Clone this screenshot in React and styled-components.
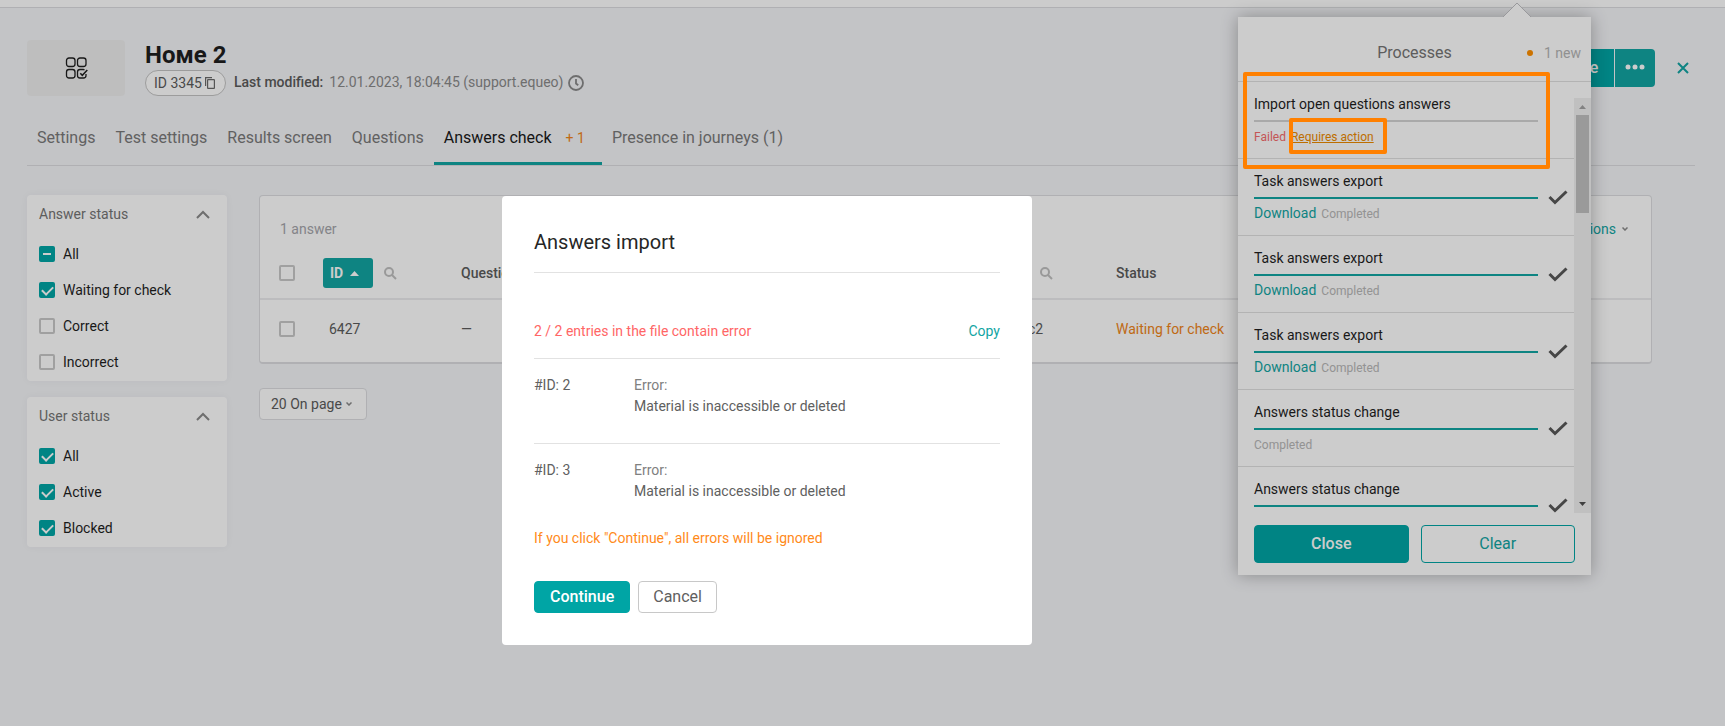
import { useEffect, useRef } from "react";
import styled, { createGlobalStyle } from "styled-components";

const GlobalStyle = createGlobalStyle`
  * {
    box-sizing: border-box;
  }
  body {
    margin: 0;
    background-color: #f4f5f8;
    color: #1f1f1f;
    font-family: Roboto, "Liberation Sans", sans-serif;
    font-size: 14px;
    line-height: 20px;
  }
  button, input, select {
    font-family: inherit;
  }
`;

const Page = styled.div`
  min-height: 100vh;
`;

const TopBar = styled.header`
  height: 8px;
  background-color: #fff;
  border-bottom: 1px solid #dcdde0;
`;

const PageHead = styled.section`
  display: flex;
  align-items: flex-start;
  padding: 32px 30px 0 27px;
`;

const Thumb = styled.div`
  display: flex;
  align-items: center;
  justify-content: center;
  width: 98px;
  height: 56px;
  margin-right: 20px;
  background-color: #eee;
  border-radius: 4px;
`;

const HeadInfo = styled.div`
  flex: 1;
`;

const Title = styled.h1`
  margin: 0;
  font-size: 24px;
  font-weight: 700;
  line-height: 30px;
`;

const Meta = styled.div`
  display: flex;
  align-items: center;
  color: #8a8a8a;
`;

const IdPill = styled.button`
  display: flex;
  align-items: center;
  gap: 3px;
  height: 26px;
  margin-right: 8px;
  padding: 0 10px 0 8px;
  background-color: #fff;
  border: 1px solid #c4c4c4;
  border-radius: 13px;
  color: #5c5c5c;
  font-size: 14px;
`;

const MetaLabel = styled.span`
  margin-right: 6px;
  padding-bottom: 2px;
  color: #5c5c5c;
  font-weight: 500;
`;

const MetaValue = styled.span`
  margin-right: 5px;
  padding-bottom: 2px;
`;

const HeadActions = styled.div`
  display: flex;
  align-items: center;
  gap: 1px;
  padding-top: 9px;
`;

const HeadButton = styled.button`
  display: flex;
  align-items: center;
  justify-content: center;
  height: 38px;
  padding: 0 0 2px;
  width: ${(props) => props.$width};
  background-color: ${(props) => props.$color};
  border: 0;
  border-radius: ${(props) => (props.$last ? "0 4px 4px 0" : "4px 0 0 4px")};
  color: #fff;
  font-size: 16px;
  font-weight: 500;
`;

const CloseButton = styled.button`
  display: flex;
  margin-left: 16px;
  padding: 0 6px 0 5px;
  background: none;
  border: 0;
`;

const Tabs = styled.nav`
  display: flex;
  margin: 24px 30px 0 27px;
  border-bottom: 1px solid #dcdde0;
`;

const Tab = styled.a`
  display: flex;
  gap: 14px;
  height: 45px;
  padding: 8px ${(props) => (props.$active ? "17px" : "10px")} 0 10px;
  border-bottom: 3px solid ${(props) => (props.$active ? "#12a5a3" : "transparent")};
  color: ${(props) => (props.$active ? "#1a1a1a" : "#7a7a7a")};
  font-size: 16px;
  text-decoration: none;
`;

const TabCount = styled.span`
  color: #f08519;
  font-size: 14px;
`;

const Content = styled.main`
  display: flex;
  align-items: flex-start;
  gap: 32px;
  padding: 29px 73px 0 27px;
`;

const Sidebar = styled.aside`
  display: flex;
  flex-direction: column;
  gap: 16px;
  width: 200px;
`;

const FilterCard = styled.fieldset`
  margin: 0;
  padding: 0 12px;
  min-width: 0;
  background-color: #fff;
  border: 0;
  border-radius: 4px;
  box-shadow: 0 0 8px rgba(0, 0, 0, 0.04);
`;

const FilterHead = styled.div`
  display: flex;
  align-items: center;
  justify-content: space-between;
  height: 38px;
  padding-right: 5px;
  color: #757575;
`;

const FilterList = styled.div`
  display: flex;
  flex-direction: column;
  gap: 16px;
  padding: 11px 0 9px;
`;

const FilterLabel = styled.label`
  display: flex;
  align-items: center;
  gap: 8px;
  color: #1f1f1f;
`;

const CheckInput = styled.input`
  appearance: none;
  flex: none;
  display: grid;
  place-content: center;
  width: 16px;
  height: 16px;
  margin: 0;
  background-color: #fff;
  border: 2px solid #c8c8c8;
  border-radius: 2px;

  &:checked,
  &:indeterminate {
    background-color: #00a5a5;
    border-color: #00a5a5;
  }
  &:checked::before {
    content: "";
    width: 9px;
    height: 5px;
    margin-top: -2px;
    border: solid #fff;
    border-width: 0 0 2px 2px;
    transform: rotate(-45deg);
  }
  &:indeterminate::before {
    content: "";
    width: 8px;
    height: 2px;
    background-color: #fff;
  }
`;

const Results = styled.div`
  flex: 1;
`;

const TableCard = styled.section`
  background-color: #fff;
  border: 1px solid #dcdde0;
  border-bottom-width: 2px;
  border-radius: 4px;
`;

const TableTop = styled.div`
  display: flex;
  justify-content: space-between;
  padding: 23px 23px 9px 20px;
  color: #a5a5ab;
`;

const ActionsButton = styled.button`
  display: flex;
  align-items: center;
  gap: 6px;
  padding: 0;
  background: none;
  border: 0;
  color: #12a5a3;
  font-size: 14px;
  line-height: 20px;
`;

const Table = styled.table`
  width: 100%;
  border-collapse: collapse;
  table-layout: fixed;
  color: #5c5c5c;
`;

const HeadCell = styled.th`
  width: ${(props) => props.$width};
  height: 51px;
  padding: 0 0 0 ${(props) => props.$pad || "0"};
  border-bottom: 2px solid #ececee;
  font-weight: 500;
  text-align: left;

  svg {
    display: block;
  }
`;

const Cell = styled.td`
  height: 63px;
  padding: 0 0 4px ${(props) => props.$pad || "0"};
  color: ${(props) => (props.$waiting ? "#f08519" : "inherit")};
`;

const HeadGroup = styled.div`
  display: flex;
  align-items: center;
  gap: 11px;
`;

const SortButton = styled.button`
  display: flex;
  align-items: center;
  gap: 7px;
  width: 50px;
  height: 30px;
  padding: 0 7px;
  background-color: #12a5a3;
  border: 0;
  border-radius: 3px;
  color: #fff;
  font-size: 14px;
  font-weight: 700;
`;

const PageSize = styled.label`
  display: inline-flex;
  align-items: center;
  height: 32px;
  margin-top: 24px;
  padding: 0 14px 0 11px;
  background-color: #fff;
  border: 1px solid #dcdde0;
  border-radius: 4px;
`;

const PageSizeSelect = styled.select`
  appearance: none;
  width: 75px;
  margin: 0;
  padding: 0;
  background: none;
  border: 0;
  color: #5c5c5c;
  font-size: 14px;
`;

const Popover = styled.section`
  position: absolute;
  top: 17px;
  right: 134px;
  display: flex;
  flex-direction: column;
  width: 353px;
  background-color: #fff;
  box-shadow: 0 0 16px rgba(0, 0, 0, 0.3);
`;

const PopoverArrow = styled.svg`
  position: absolute;
  top: -15px;
  right: 59px;
`;

const PopoverHead = styled.div`
  display: grid;
  grid-template-columns: 1fr auto 1fr;
  align-items: center;
  height: 65px;
  padding: 8px 10px 0;
  border-bottom: 1px solid #e0e0e0;
`;

const PopoverTitle = styled.h2`
  margin: 0;
  color: #757575;
  font-size: 16px;
  font-weight: 400;
`;

const NewCount = styled.span`
  display: flex;
  align-items: center;
  justify-content: flex-end;
  gap: 11px;
  color: #b5b5b5;

  &::before {
    content: "";
    width: 6px;
    height: 6px;
    background-color: #ff9000;
    border-radius: 50%;
  }
`;

const ProcessScroll = styled.div`
  display: flex;
  height: 415px;
  margin-top: 16px;
`;

const ProcessList = styled.ul`
  flex: 1;
  margin: 0;
  padding: 0;
  overflow: hidden;
  list-style: none;
`;

const ProcessItem = styled.li`
  display: flex;
  align-items: flex-start;
  height: 77px;
  padding: 12px 6px 0 16px;
  border-bottom: 1px solid #e0e0e0;

  &:first-child {
    height: 61px;
    padding-top: 0;
  }
  &:first-child > div {
    margin-top: -4px;
  }
`;

const ProcessBody = styled.div`
  flex: 1;
`;

const ProcessName = styled.div`
  color: #1f1f1f;
`;

const ProgressLine = styled.div`
  height: 2px;
  margin: 6px 0 5px;
  background-color: ${(props) => (props.$failed ? "#d4d4d4" : "#12a5a3")};
`;

const ProcessStatus = styled.div`
  display: flex;
  align-items: baseline;
  gap: 5px;
  color: ${(props) => (props.$failed ? "#f56c6c" : "#b8b8b8")};
  font-size: 12px;
  line-height: 20px;
`;

const DownloadLink = styled.a`
  color: #12a5a3;
  font-size: 14px;
  line-height: 18px;
  text-decoration: none;
`;

const ActionLink = styled.a`
  color: #ed8a00;
  font-size: 12px;
`;

const DoneMark = styled.svg`
  flex: none;
  margin: 19px 0 0 10px;
`;

const ScrollTrack = styled.div`
  display: flex;
  flex-direction: column;
  align-items: center;
  width: 17px;
  background-color: #f1f1f1;
`;

const ScrollThumb = styled.div`
  width: 13px;
  height: 98px;
  margin-bottom: auto;
  background-color: #c1c1c1;
`;

const PopoverFoot = styled.div`
  display: grid;
  grid-template-columns: 1fr 1fr;
  gap: 12px;
  padding: 12px 16px;
`;

const PopoverButton = styled.button`
  height: 38px;
  padding: 0 0 2px;
  background-color: ${(props) => (props.$primary ? "#00a5a5" : "#fff")};
  border: 1px solid #00a5a5;
  border-radius: 4px;
  color: ${(props) => (props.$primary ? "#fff" : "#12a5a3")};
  font-size: 16px;
  font-weight: ${(props) => (props.$primary ? 500 : 400)};
`;

const Overlay = styled.div`
  position: fixed;
  inset: 0;
  display: flex;
  align-items: flex-start;
  justify-content: center;
  padding: 196px 191px 0 0;
  background-color: rgba(0, 0, 0, 0.2);
`;

const Modal = styled.section`
  width: 530px;
  padding: 32px;
  background-color: #fff;
  border-radius: 4px;
  color: #606060;
`;

const ModalTitle = styled.h2`
  margin: 0;
  padding-bottom: 16px;
  border-bottom: 1px solid #e2e2e2;
  color: #262626;
  font-size: 20px;
  font-weight: 400;
  line-height: 28px;
`;

const ErrorSummary = styled.div`
  display: flex;
  justify-content: space-between;
  padding: 48px 0 17px;
  color: #ff6666;
`;

const TextButton = styled.button`
  padding: 0;
  background: none;
  border: 0;
  color: #12a5a3;
  font-size: 14px;
  line-height: 20px;
`;

const ErrorEntry = styled.div`
  display: flex;
  min-height: 85px;
  padding-top: 16px;
  border-top: 1px solid #e2e2e2;
  line-height: 21px;
`;

const EntryId = styled.div`
  width: 100px;
`;

const EntryLabel = styled.div`
  color: #808080;
`;

const Warning = styled.p`
  margin: 0 0 33px;
  color: #ff8a1a;
`;

const ModalButtons = styled.div`
  display: flex;
  gap: 8px;
`;

const ModalButton = styled.button`
  height: 32px;
  padding: 0 ${(props) => (props.$primary ? "15px" : "14px")} 2px;
  background-color: ${(props) => (props.$primary ? "#00a5a5" : "#fff")};
  border: 1px solid ${(props) => (props.$primary ? "#00a5a5" : "#c8c8c8")};
  border-radius: 4px;
  color: ${(props) => (props.$primary ? "#fff" : "#606060")};
  font-size: 16px;
  font-weight: ${(props) => (props.$primary ? 500 : 400)};
`;

// Marker frames drawn above everything, popover included
const Highlight = styled.div`
  position: absolute;
  top: ${(props) => props.$top};
  right: ${(props) => props.$right};
  width: ${(props) => props.$width};
  height: ${(props) => props.$height};
  border: 4px solid #ff8000;
  border-radius: 2px;
  pointer-events: none;
`;

const tabs = [
  { name: "Settings" },
  { name: "Test settings" },
  { name: "Results screen" },
  { name: "Questions" },
  { name: "Answers check", count: "+ 1", active: true },
  { name: "Presence in journeys (1)" },
];

const filters = [
  {
    title: "Answer status",
    options: [
      { label: "All", partial: true },
      { label: "Waiting for check", checked: true },
      { label: "Correct" },
      { label: "Incorrect" },
    ],
  },
  {
    title: "User status",
    options: [
      { label: "All", checked: true },
      { label: "Active", checked: true },
      { label: "Blocked", checked: true },
    ],
  },
];

const processes = [
  { id: 1, name: "Import open questions answers", status: "Failed", failed: true },
  { id: 2, name: "Task answers export", status: "Completed", download: true },
  { id: 3, name: "Task answers export", status: "Completed", download: true },
  { id: 4, name: "Task answers export", status: "Completed", download: true },
  { id: 5, name: "Answers status change", status: "Completed" },
  { id: 6, name: "Answers status change" },
];

const errors = [2, 3];

const GridIcon = () => (
  <svg width="24" height="24" viewBox="0 0 24 24" fill="none" stroke="#1f1f1f" strokeWidth="1.3">
    <rect x="2.500" y="2" width="8.500" height="8.500" rx="2.500" />
    <rect x="13.500" y="2" width="8.500" height="8.500" rx="2.500" />
    <rect x="2.500" y="13.500" width="8.500" height="8.500" rx="2.500" />
    <path d="M20.500 13.800a3 3 0 0 0-1.200-.3h-3.300a2.500 2.500 0 0 0-2.500 2.500v3.500a2.500 2.500 0 0 0 2.500 2.500h3.500a2.500 2.500 0 0 0 2.500-2.500v-1.500" />
    <path d="M16.300 17.300l2 2 5-5.300" strokeWidth="1.500" />
  </svg>
);

const CopyIcon = () => (
  <svg width="10" height="12" viewBox="0 0 10 12" fill="none" stroke="#6b6b6b" strokeWidth="1.200">
    <path d="M.6 9V.6H7" />
    <rect x="2.600" y="2.600" width="6.800" height="8.800" rx=".5" />
  </svg>
);

const ClockIcon = () => (
  <svg width="16" height="16" viewBox="0 0 16 16" fill="none" stroke="#8a8a8a" strokeWidth="1.800">
    <circle cx="8" cy="8" r="7" />
    <path d="M8 4v4.500l2.200 1.800" />
  </svg>
);

const SearchIcon = () => (
  <svg width="13" height="13" viewBox="0 0 13 13" fill="none" stroke="#c0c0c0" strokeWidth="2">
    <circle cx="5" cy="5" r="4" />
    <path d="M8 8l4 4" />
  </svg>
);

const SmallChevron = () => (
  <svg width="6" height="4" viewBox="0 0 6 4" fill="none" stroke="#8a8a8a" strokeWidth="1.500">
    <path d="M.5.500L3 3 5.500.500" />
  </svg>
);

const Checkbox = ({ partial, ...props }) => {
  const ref = useRef(null);
  useEffect(() => {
    ref.current.indeterminate = Boolean(partial);
  }, [partial]);
  return <CheckInput ref={ref} type="checkbox" {...props} />;
};

const FilterGroup = ({ title, options }) => (
  <FilterCard aria-label={title}>
    <FilterHead>
      {title}
      <svg width="14" height="9" viewBox="0 0 14 9" fill="none" stroke="#8a8a8a" strokeWidth="2">
        <path d="M1 8l6-6 6 6" />
      </svg>
    </FilterHead>
    <FilterList>
      {options.map((option) => (
        <FilterLabel key={option.label}>
          <Checkbox defaultChecked={option.checked} partial={option.partial} />
          {option.label}
        </FilterLabel>
      ))}
    </FilterList>
  </FilterCard>
);

const AnswersTable = () => (
  <Table>
    <thead>
      <tr>
        <HeadCell $width="63px" $pad="19px">
          <Checkbox aria-label="Select all" />
        </HeadCell>
        <HeadCell $width="138px">
          <HeadGroup>
            <SortButton>
              ID
              <svg width="9" height="5" viewBox="0 0 9 5">
                <path d="M0 5l4.500-5L9 5z" fill="#fff" />
              </svg>
            </SortButton>
            <SearchIcon />
          </HeadGroup>
        </HeadCell>
        <HeadCell $width="540px">Question</HeadCell>
        <HeadCell $width="115px" $pad="39px">
          <SearchIcon />
        </HeadCell>
        <HeadCell>Status</HeadCell>
      </tr>
    </thead>
    <tbody>
      <tr>
        <Cell $pad="19px">
          <Checkbox aria-label="Select 6427" />
        </Cell>
        <Cell $pad="6px">6427</Cell>
        <Cell>—</Cell>
        <Cell $pad="27px">c2</Cell>
        <Cell $waiting>Waiting for check</Cell>
      </tr>
    </tbody>
  </Table>
);

const ProcessRow = ({ name, status, failed, download }) => (
  <ProcessItem>
    <ProcessBody>
      <ProcessName>{name}</ProcessName>
      <ProgressLine $failed={failed} />
      {status && (
        <ProcessStatus $failed={failed}>
          {download && <DownloadLink href="#download">Download</DownloadLink>}
          {status}
          {failed && <ActionLink href="#action">Requires action</ActionLink>}
        </ProcessStatus>
      )}
    </ProcessBody>
    <DoneMark width="20" height="15" viewBox="0 0 20 15" fill="none">
      {!failed && <path d="M1.500 7l5.500 5.500L18.500 1.500" stroke="#585858" strokeWidth="3" />}
    </DoneMark>
  </ProcessItem>
);

const ProcessesPopover = () => (
  <Popover>
    <PopoverArrow width="30" height="16" viewBox="0 0 30 16">
      <path d="M1 15L15 1l14 14v1H1z" fill="#fff" />
      <path d="M1 15L15 1l14 14" fill="none" stroke="#c0c0c4" />
    </PopoverArrow>
    <PopoverHead>
      <span />
      <PopoverTitle>Processes</PopoverTitle>
      <NewCount>1 new</NewCount>
    </PopoverHead>
    <ProcessScroll>
      <ProcessList>
        {processes.map((process) => (
          <ProcessRow key={process.id} {...process} />
        ))}
      </ProcessList>
      <ScrollTrack>
        <svg width="17" height="17" viewBox="0 0 17 17">
          <path d="M5 11l3.500-4L12 11z" fill="#a3a3a3" />
        </svg>
        <ScrollThumb />
        <svg width="17" height="17" viewBox="0 0 17 17">
          <path d="M5 6l3.500 4L12 6z" fill="#505050" />
        </svg>
      </ScrollTrack>
    </ProcessScroll>
    <PopoverFoot>
      <PopoverButton $primary>Close</PopoverButton>
      <PopoverButton>Clear</PopoverButton>
    </PopoverFoot>
  </Popover>
);

const ImportModal = () => (
  <Overlay>
    <Modal role="dialog" aria-labelledby="import-title">
      <ModalTitle id="import-title">Answers import</ModalTitle>
      <ErrorSummary>
        2 / 2 entries in the file contain error
        <TextButton>Copy</TextButton>
      </ErrorSummary>
      {errors.map((id) => (
        <ErrorEntry key={id}>
          <EntryId>#ID: {id}</EntryId>
          <div>
            <EntryLabel>Error:</EntryLabel>
            <div>Material is inaccessible or deleted</div>
          </div>
        </ErrorEntry>
      ))}
      <Warning>If you click "Continue", all errors will be ignored</Warning>
      <ModalButtons>
        <ModalButton $primary>Continue</ModalButton>
        <ModalButton>Cancel</ModalButton>
      </ModalButtons>
    </Modal>
  </Overlay>
);

const App = () => (
  <Page>
    <GlobalStyle />
    <TopBar />
    <PageHead>
      <Thumb>
        <GridIcon />
      </Thumb>
      <HeadInfo>
        <Title>Номе 2</Title>
        <Meta>
          <IdPill>
            ID 3345
            <CopyIcon />
          </IdPill>
          <MetaLabel>Last modified:</MetaLabel>
          <MetaValue>12.01.2023, 18:04:45 (support.equeo)</MetaValue>
          <ClockIcon />
        </Meta>
      </HeadInfo>
      <HeadActions>
        <HeadButton $width="66px" $color="#00a5a5">
          Save
        </HeadButton>
        <HeadButton $width="40px" $color="#12a5a3" $last aria-label="More">
          <svg width="20" height="6" viewBox="0 0 20 6" fill="#fff">
            <circle cx="3" cy="3" r="2.500" />
            <circle cx="10" cy="3" r="2.500" />
            <circle cx="17" cy="3" r="2.500" />
          </svg>
        </HeadButton>
        <CloseButton aria-label="Close">
          <svg width="12" height="12" viewBox="0 0 12 12" fill="none" stroke="#12a5a3" strokeWidth="2">
            <path d="M1 1l10 10M11 1L1 11" />
          </svg>
        </CloseButton>
      </HeadActions>
    </PageHead>
    <Tabs>
      {tabs.map((tab) => (
        <Tab key={tab.name} href="#tab" $active={tab.active}>
          {tab.name}
          {tab.count && <TabCount>{tab.count}</TabCount>}
        </Tab>
      ))}
    </Tabs>
    <Content>
      <Sidebar>
        {filters.map((filter) => (
          <FilterGroup key={filter.title} {...filter} />
        ))}
      </Sidebar>
      <Results>
        <TableCard>
          <TableTop>
            1 answer
            <ActionsButton>
              Actions
              <SmallChevron />
            </ActionsButton>
          </TableTop>
          <AnswersTable />
        </TableCard>
        <PageSize>
          <PageSizeSelect aria-label="Rows on page">
            <option>20 On page</option>
          </PageSizeSelect>
          <SmallChevron />
        </PageSize>
      </Results>
    </Content>
    <ProcessesPopover />
    <ImportModal />
    <Highlight $top="72px" $right="175px" $width="307px" $height="97px" />
    <Highlight $top="118px" $right="338px" $width="98px" $height="36px" />
  </Page>
);

export default App;
